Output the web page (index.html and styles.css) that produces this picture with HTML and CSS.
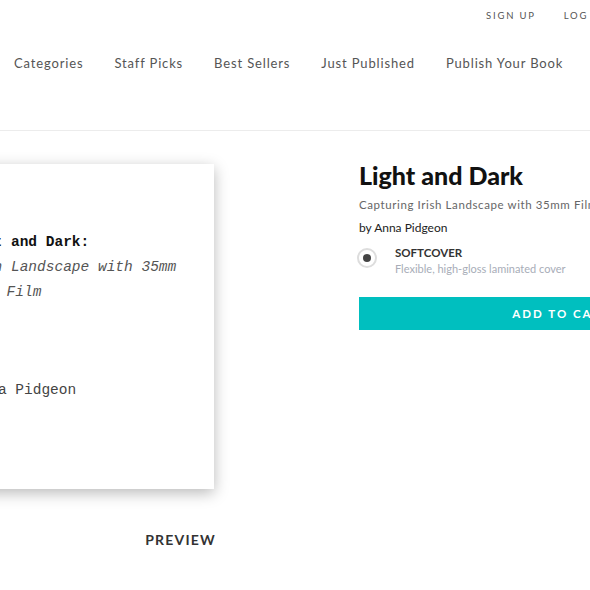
FILE: index.html
```html
<!DOCTYPE html>
<html>
<head>
<meta charset="utf-8">
<link rel="stylesheet" href="styles.css">
</head>
<body>
<header class="header">
  <div class="account">
    <a class="account-link">SIGN UP</a>
    <a class="account-link">LOG IN</a>
  </div>
  <nav class="nav">
    <a class="nav-link">Categories</a>
    <a class="nav-link">Staff Picks</a>
    <a class="nav-link">Best Sellers</a>
    <a class="nav-link">Just Published</a>
    <a class="nav-link">Publish Your Book</a>
  </nav>
</header>
<main class="product">
  <section class="preview">
    <div class="cover">
      <div class="cover-title">Light and Dark:</div>
      <div class="cover-subtitle">Capturing Irish Landscape with 35mm Film</div>
      <div class="cover-author">Anna Pidgeon</div>
    </div>
    <div class="preview-label">PREVIEW</div>
  </section>
  <section class="details">
    <h1 class="title">Light and Dark</h1>
    <p class="subtitle">Capturing Irish Landscape with 35mm Film</p>
    <p class="author">by Anna Pidgeon</p>
    <div class="option">
      <span class="radio"><span class="radio-dot"></span></span>
      <div class="option-text">
        <div class="option-name">SOFTCOVER</div>
        <div class="option-desc">Flexible, high-gloss laminated cover</div>
      </div>
    </div>
    <button class="cart-btn">ADD TO CART</button>
  </section>
</main>
</body>
</html>
```
FILE: styles.css
```css
html, body {
  margin: 0;
  padding: 0;
  background: #fff;
  overflow: hidden;
  width: 590px;
  height: 590px;
}
body {
  font-family: Lato, "Noto Sans", sans-serif;
  color: #333;
}
.header {
  border-bottom: 1px solid #ececec;
  height: 131px;
  box-sizing: border-box;
}
.account {
  display: flex;
  justify-content: flex-start;
  gap: 28px;
  padding: 10px 0 0 486px;
  white-space: nowrap;
}
.account-link {
  font-size: 9.5px;
  letter-spacing: 1.8px;
  color: #555;
}
.nav {
  display: flex;
  gap: 31px;
  padding: 34px 0 0 14px;
  white-space: nowrap;
}
.nav-link {
  font-size: 13px;
  letter-spacing: 0.85px;
  color: #555;
}
.product {
  display: flex;
  gap: 145px;
  padding-top: 33px;
  margin-left: -166px;
}
.preview {
  width: 380px;
  flex: none;
  display: flex;
  flex-direction: column;
  align-items: flex-end;
}
.cover {
  width: 380px;
  height: 325px;
  box-sizing: border-box;
  background: #fff;
  box-shadow: 0 4px 14px rgba(0, 0, 0, 0.28);
  padding: 66px 28px 0;
  font-family: "Liberation Mono", monospace;
  font-size: 14.5px;
  line-height: 25px;
  text-align: center;
  color: #444;
}
.cover-title {
  font-weight: bold;
  color: #111;
}
.cover-subtitle {
  font-style: italic;
  color: #555;
}
.cover-author {
  margin-top: 73px;
  color: #444;
}
.preview-label {
  margin-top: 42px;
  margin-right: -2px;
  font-size: 14px;
  font-weight: bold;
  letter-spacing: 1.2px;
  color: #333;
}
.details {
  width: 405px;
  flex: none;
}
.title {
  margin: -3px 0 0;
  font-size: 25px;
  font-weight: 900;
  color: #111;
  line-height: 28px;
}
.subtitle {
  margin: 9px 0 0;
  font-size: 11.5px;
  letter-spacing: 0.6px;
  color: #666;
  white-space: nowrap;
}
.author {
  margin: 9px 0 0;
  font-size: 12px;
  color: #222;
}
.option {
  display: flex;
  align-items: flex-start;
  gap: 18px;
  margin-top: 11px;
  margin-left: -2px;
}
.radio {
  width: 16px;
  height: 16px;
  border: 2px solid #ddd;
  border-radius: 50%;
  display: flex;
  align-items: center;
  justify-content: center;
  margin-top: 2px;
}
.radio-dot {
  width: 8px;
  height: 8px;
  border-radius: 50%;
  background: #444;
}
.option-name {
  font-size: 11.5px;
  font-weight: bold;
  color: #333;
}
.option-desc {
  margin-top: 3px;
  font-size: 11px;
  color: #a8adb8;
}
.cart-btn {
  display: block;
  margin-top: 22px;
  width: 405px;
  height: 33px;
  border: none;
  background: #00bfbf;
  color: #fff;
  font-family: Lato, sans-serif;
  font-weight: bold;
  font-size: 11.5px;
  letter-spacing: 2px;
}
```
